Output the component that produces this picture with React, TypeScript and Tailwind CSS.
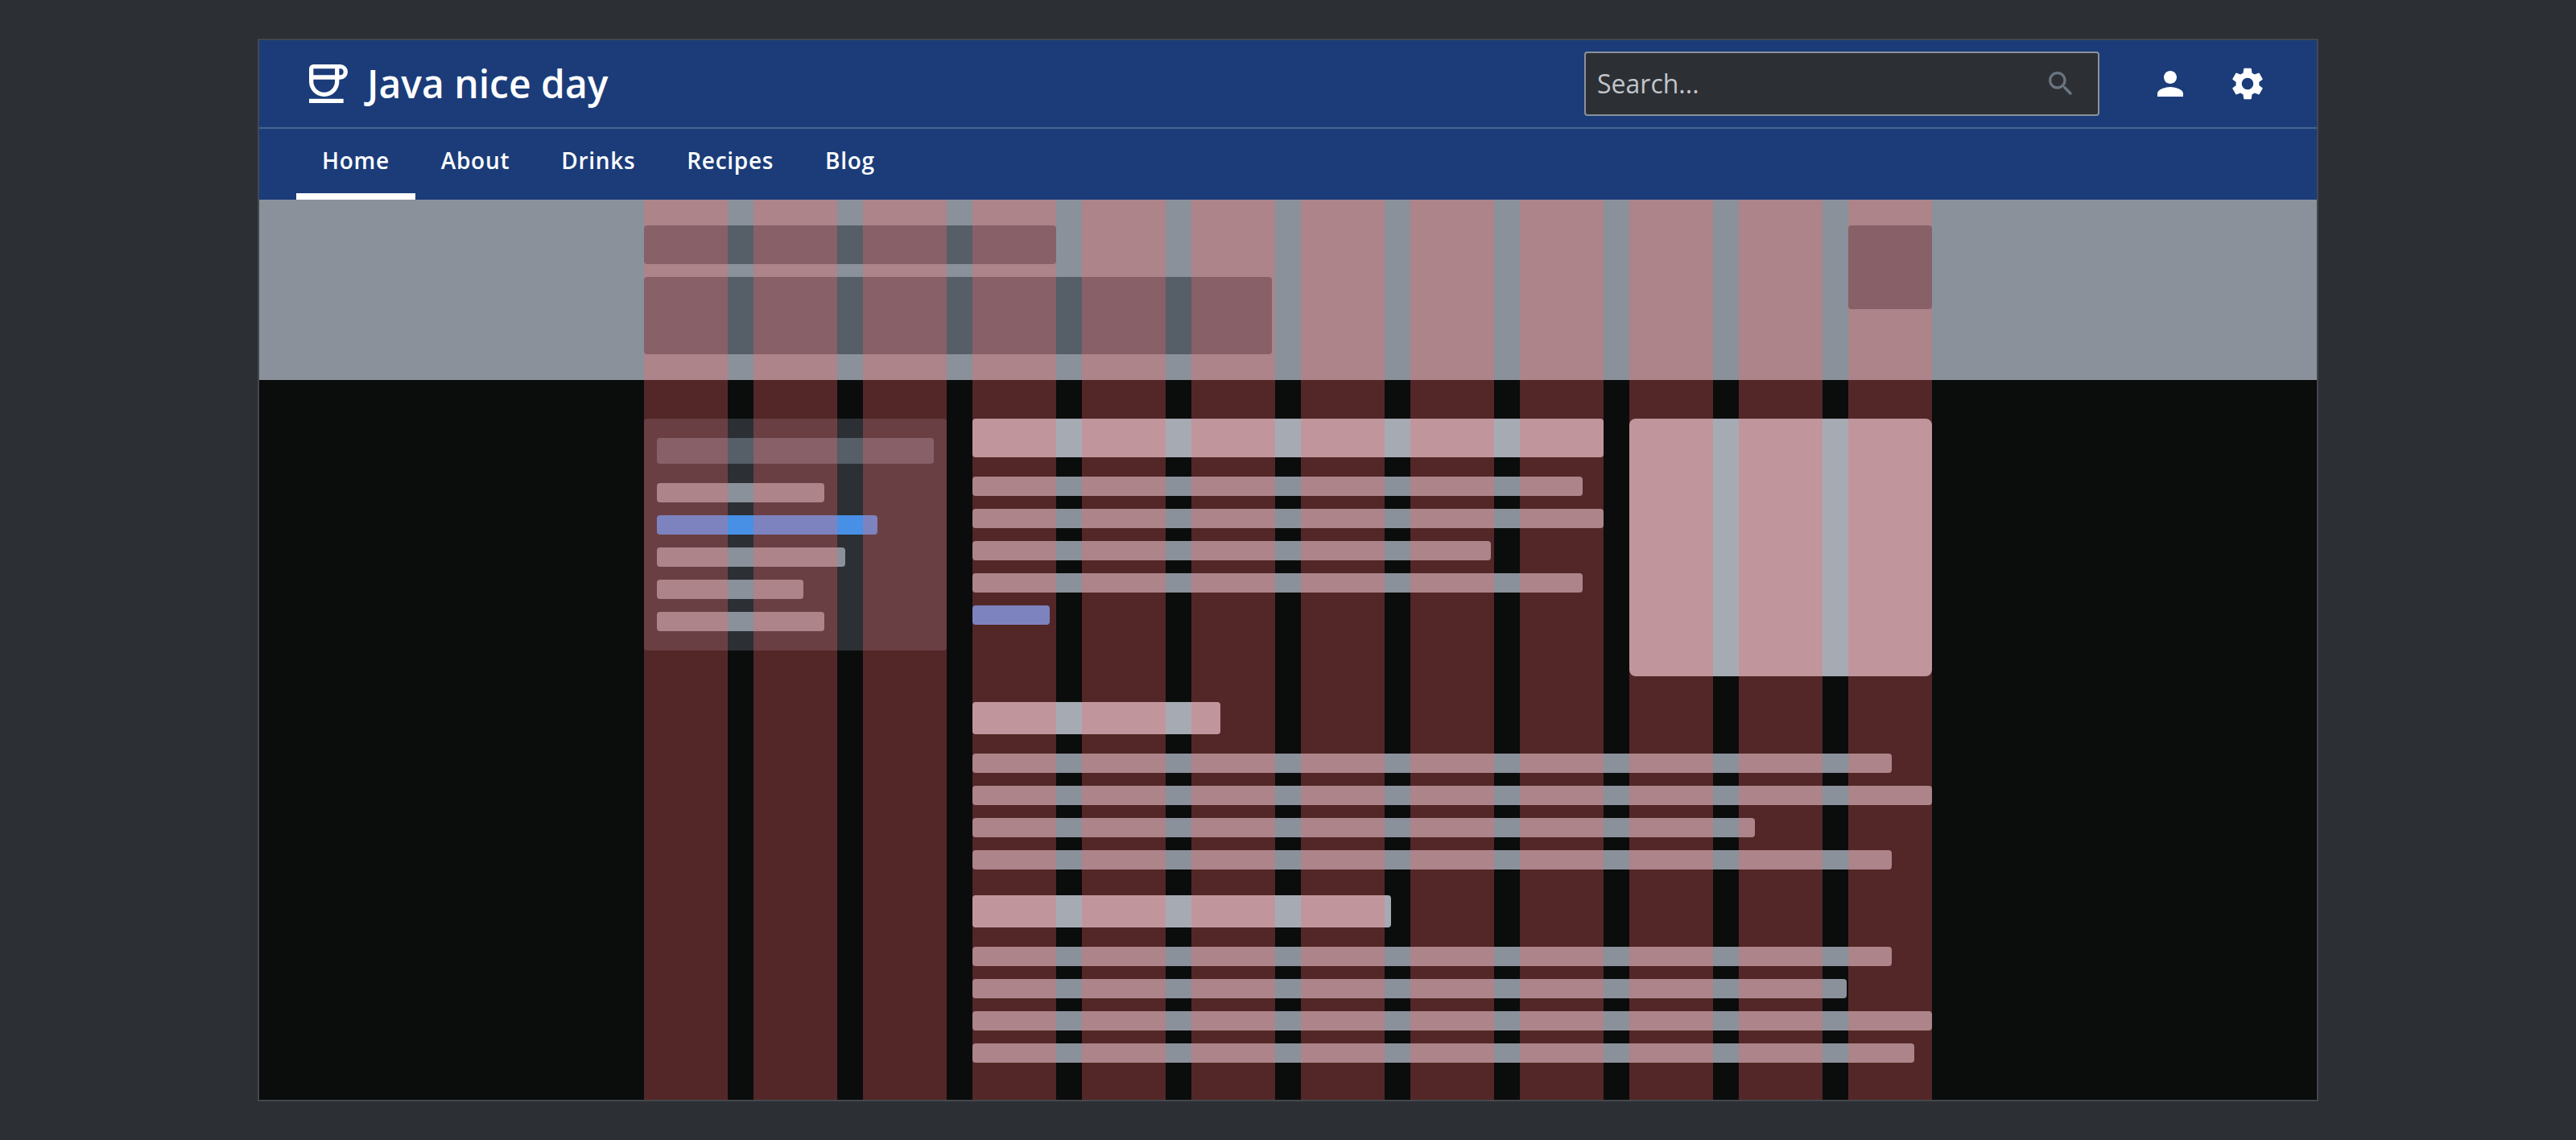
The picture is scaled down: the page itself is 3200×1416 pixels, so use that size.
import { MdPerson, MdSearch, MdSettings } from "react-icons/md";

const navItems = ["Home", "About", "Drinks", "Recipes", "Blog"];

const sidebarRows = [
  "w-[208px] bg-[#8a919a]",
  "w-[274px] bg-[#4790e6]",
  "w-[234px] bg-[#8a919a]",
  "w-[182px] bg-[#8a919a]",
  "w-[208px] bg-[#8a919a]",
];

const introRows = [
  "w-[758px] bg-[#8a919a]",
  "w-full bg-[#8a919a]",
  "w-[644px] bg-[#8a919a]",
  "w-[758px] bg-[#8a919a]",
  "w-24 bg-[#4790e6]",
];

const sections = [
  {
    title: "w-[308px]",
    rows: ["w-[1142px]", "w-full", "w-[972px]", "w-[1142px]"],
  },
  {
    title: "w-[520px]",
    rows: ["w-[1142px]", "w-[1086px]", "w-full", "w-[1170px]"],
  },
];

function CupLogo() {
  return (
    <svg viewBox="0 0 48 48" className="size-12" fill="none" stroke="currentColor" strokeWidth="5.33" aria-hidden="true">
      <path d="M5.330 2.670H34.670V21.330A16 16 0 0 1 2.670 21.330V5.330A2.670 2.670 0 0 1 5.330 2.670Z" />
      <path d="M34.670 2.670H38.670A6.660 6.660 0 0 1 38.670 16H2.670" />
      <path d="M0 45.330H42.670" />
    </svg>
  );
}

function TopBar() {
  return (
    <div className="flex items-center justify-between border-b-2 border-[#496394] px-[62px] py-3.5">
      <a href="#home" className="flex items-center gap-6 text-5xl font-semibold">
        <CupLogo />
        <span>Java nice day</span>
      </a>
      <div className="flex items-center gap-16">
        <form role="search" className="flex h-20 w-[640px] items-center rounded-sm border-2 border-[#8a919a] bg-[#2c2f34] pr-[26px] pl-3.5">
          <input
            type="search"
            aria-label="Search"
            placeholder="Search..."
            className="min-w-0 grow bg-transparent text-[32px] outline-none placeholder:text-[#c1c5c9]"
          />
          <button type="submit" aria-label="Submit search" className="text-[#6b7580]">
            <MdSearch className="size-10" />
          </button>
        </form>
        <div className="flex gap-12">
          <button type="button" aria-label="Profile">
            <MdPerson className="size-12" />
          </button>
          <button type="button" aria-label="Settings">
            <MdSettings className="size-12" />
          </button>
        </div>
      </div>
    </div>
  );
}

function Nav() {
  return (
    <nav className="flex h-[88px] px-[46px] text-[28px] font-semibold tracking-wide">
      {navItems.map((item, i) => (
        <a
          key={item}
          href={`#${item.toLowerCase()}`}
          aria-current={i === 0 ? "page" : undefined}
          className={`flex items-center border-b-8 px-8 pb-0.5 ${i === 0 ? "border-white" : "border-transparent"}`}
        >
          {item}
        </a>
      ))}
    </nav>
  );
}

function Hero() {
  return (
    <div className="bg-[#8a919a] py-8">
      <div className="mx-auto flex max-w-[1600px] items-start justify-between">
        <div className="flex flex-col gap-4">
          <div className="h-12 w-[512px] rounded bg-[#565e67]" />
          <div className="h-24 w-[780px] rounded bg-[#565e67]" />
        </div>
        <div className="size-[104px] rounded bg-[#565e67]" />
      </div>
    </div>
  );
}

function Sidebar() {
  return (
    <aside className="col-span-3 flex flex-col gap-6 self-start rounded bg-[#2c2f34] px-4 py-6">
      <div className="h-8 rounded bg-[#565e67]" />
      <div className="flex flex-col gap-4">
        {sidebarRows.map((row, i) => (
          <div key={i} className={`h-6 rounded ${row}`} />
        ))}
      </div>
    </aside>
  );
}

function Article() {
  return (
    <article className="col-span-9 flex flex-col gap-8">
      <div className="grid grid-cols-9 gap-8">
        <div className="col-span-6 flex flex-col gap-6">
          <div className="h-12 rounded bg-[#a6abb3]" />
          <div className="flex flex-col gap-4">
            {introRows.map((row, i) => (
              <div key={i} className={`h-6 rounded ${row}`} />
            ))}
          </div>
        </div>
        <div className="col-span-3 h-80 rounded-lg bg-[#a6abb3]" />
      </div>
      {sections.map((section) => (
        <section key={section.title} className="flex flex-col gap-6">
          <div className={`h-10 rounded bg-[#a6abb3] ${section.title}`} />
          <div className="flex flex-col gap-4">
            {section.rows.map((row, i) => (
              <div key={i} className={`h-6 rounded bg-[#8a919a] ${row}`} />
            ))}
          </div>
        </section>
      ))}
    </article>
  );
}

function ColumnOverlay() {
  return (
    <div className="pointer-events-none absolute inset-0" aria-hidden="true">
      <div className="mx-auto grid h-full max-w-[1600px] grid-cols-12 gap-8">
        {Array.from({ length: 12 }, (_, i) => (
          <div key={i} className="bg-[#fc6666]/30" />
        ))}
      </div>
    </div>
  );
}

export default function App() {
  return (
    <div className="min-h-screen bg-[#2c2f34] px-80 py-12 font-['Open_Sans',sans-serif]">
      <div className="border-2 border-[#43474d] bg-[#0b0c0c]">
        <header className="bg-[#1b3c79] text-white">
          <TopBar />
          <Nav />
        </header>
        <main className="relative">
          <Hero />
          <div className="mx-auto grid max-w-[1600px] grid-cols-12 gap-8 pt-12 pb-[46px]">
            <Sidebar />
            <Article />
          </div>
          <ColumnOverlay />
        </main>
      </div>
    </div>
  );
}
